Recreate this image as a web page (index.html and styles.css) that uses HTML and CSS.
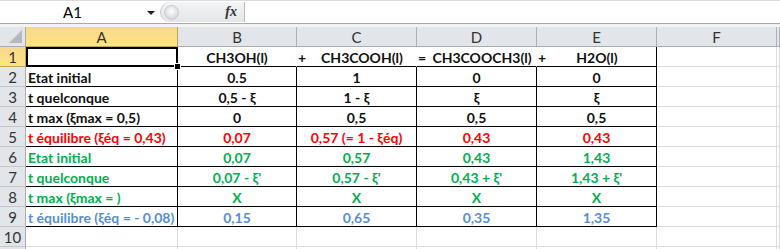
FILE: index.html
```html
<!DOCTYPE html>
<html lang="fr">

<head>
    <meta charset="UTF-8">
    <title>Tableau d'avancement</title>
    <link rel="stylesheet" href="styles.css">
</head>

<body>
    <div class="formula-bar">
        <div class="name-box">A1<span class="drop"></span></div>
        <div class="fx-area">
            <span class="grip"></span>
            <span class="fx">fx</span>
        </div>
        <div class="formula-input"></div>
    </div>
    <div class="strip"></div>

    <div class="sheet">
        <!-- column headers -->
        <div class="corner"><span class="tri"></span></div>
        <div class="col-head sel">A</div>
        <div class="col-head">B</div>
        <div class="col-head">C</div>
        <div class="col-head">D</div>
        <div class="col-head">E</div>
        <div class="col-head">F</div>
        <div class="col-head end"></div>

        <!-- row 1 -->
        <div class="row-head sel">1</div>
        <div class="cell a1"><span class="handle"></span></div>
        <div class="cell eq">CH3OH(l)</div>
        <div class="cell eq"><span class="op">+</span><span class="sp">CH3COOH(l)</span></div>
        <div class="cell eq"><span class="op">=</span><span class="sp">CH3COOCH3(l)</span></div>
        <div class="cell eq last"><span class="op">+</span><span class="sp shift">H2O(l)</span></div>
        <div class="cell"></div>
        <div class="cell end"></div>

        <!-- row 2 -->
        <div class="row-head">2</div>
        <div class="cell d label">Etat initial</div>
        <div class="cell d">0.5</div>
        <div class="cell d">1</div>
        <div class="cell d">0</div>
        <div class="cell d">0</div>
        <div class="cell"></div>
        <div class="cell end"></div>

        <!-- row 3 -->
        <div class="row-head">3</div>
        <div class="cell d label">t quelconque</div>
        <div class="cell d">0,5 - ξ</div>
        <div class="cell d">1 - ξ</div>
        <div class="cell d">ξ</div>
        <div class="cell d">ξ</div>
        <div class="cell"></div>
        <div class="cell end"></div>

        <!-- row 4 -->
        <div class="row-head">4</div>
        <div class="cell d label">t max (ξmax = 0,5)</div>
        <div class="cell d">0</div>
        <div class="cell d">0,5</div>
        <div class="cell d">0,5</div>
        <div class="cell d">0,5</div>
        <div class="cell"></div>
        <div class="cell end"></div>

        <!-- row 5 -->
        <div class="row-head">5</div>
        <div class="cell d label red">t équilibre (ξéq = 0,43)</div>
        <div class="cell d red">0,07</div>
        <div class="cell d red">0,57 (= 1 - ξéq)</div>
        <div class="cell d red">0,43</div>
        <div class="cell d red">0,43</div>
        <div class="cell"></div>
        <div class="cell end"></div>

        <!-- row 6 -->
        <div class="row-head">6</div>
        <div class="cell d label green">Etat initial</div>
        <div class="cell d green">0,07</div>
        <div class="cell d green">0,57</div>
        <div class="cell d green">0,43</div>
        <div class="cell d green">1,43</div>
        <div class="cell"></div>
        <div class="cell end"></div>

        <!-- row 7 -->
        <div class="row-head">7</div>
        <div class="cell d label green">t quelconque</div>
        <div class="cell d green">0,07 - ξ'</div>
        <div class="cell d green">0,57 - ξ'</div>
        <div class="cell d green">0,43 + ξ'</div>
        <div class="cell d green">1,43 + ξ'</div>
        <div class="cell"></div>
        <div class="cell end"></div>

        <!-- row 8 -->
        <div class="row-head">8</div>
        <div class="cell d label green">t max (ξmax = )</div>
        <div class="cell d green">X</div>
        <div class="cell d green">X</div>
        <div class="cell d green">X</div>
        <div class="cell d green">X</div>
        <div class="cell"></div>
        <div class="cell end"></div>

        <!-- row 9 -->
        <div class="row-head">9</div>
        <div class="cell d label blue">t équilibre (ξéq = - 0,08)</div>
        <div class="cell d blue">0,15</div>
        <div class="cell d blue">0,65</div>
        <div class="cell d blue">0,35</div>
        <div class="cell d blue">1,35</div>
        <div class="cell"></div>
        <div class="cell end"></div>

        <!-- row 10 -->
        <div class="row-head">10</div>
        <div class="cell"></div>
        <div class="cell"></div>
        <div class="cell"></div>
        <div class="cell"></div>
        <div class="cell"></div>
        <div class="cell"></div>
        <div class="cell end"></div>

        <!-- row 11, only its top edge shows -->
        <div class="row-head"></div>
        <div class="cell"></div>
        <div class="cell"></div>
        <div class="cell"></div>
        <div class="cell"></div>
        <div class="cell"></div>
        <div class="cell"></div>
        <div class="cell end"></div>
    </div>
</body>

</html>
```

FILE: styles.css
```css
body {
    margin: 0;
    background-color: #fff;
    font-family: Lato, 'Open Sans', sans-serif;
    overflow: hidden;
}

/* formula bar */

.formula-bar {
    display: flex;
    height: 24px;
    border-top: 1px solid #dadbdc;
    border-bottom: 1px solid #a7abb0;
    box-sizing: border-box;
}

.name-box {
    position: relative;
    width: 160px;
    font-size: 15px;
    line-height: 22px;
    padding-left: 63px;
    box-sizing: border-box;
    color: #000;
}

.drop {
    position: absolute;
    left: 147px;
    top: 10px;
    border-left: 4px solid transparent;
    border-right: 4px solid transparent;
    border-top: 4px solid #222;
}

.fx-area {
    display: flex;
    align-items: center;
    justify-content: space-between;
    width: 85px;
    background: linear-gradient(#f3f4f6, #e3e5e8);
    border-radius: 11px 0 0 11px;
    border-left: 1px solid #c3c6ca;
    border-right: 1px solid #b9bcc0;
    box-sizing: border-box;
    padding: 0 7px 0 3px;
    margin: 1px 0;
}

.grip {
    width: 13px;
    height: 13px;
    border-radius: 50%;
    background: radial-gradient(circle at 50% 40%, #fdfdfd, #c9ccd0);
    border: 1px solid #c7cace;
}

.fx {
    font-family: 'Liberation Serif', serif;
    font-style: italic;
    font-weight: bold;
    font-size: 14px;
    color: #333;
}

.formula-input {
    flex: 1;
}

.strip {
    height: 3px;
    background-color: #f1f2f4;
}

/* sheet */

.sheet {
    display: grid;
    grid-template-columns: 26px 152px 119px 120px 120px 120px 120px 1fr;
    grid-auto-rows: 20px;
}

.corner,
.col-head,
.row-head {
    background-color: #e2e5ea;
    color: #333;
    font-size: 15px;
    box-sizing: border-box;
    display: flex;
    align-items: center;
    justify-content: center;
}

.corner {
    position: relative;
    border-right: 1px solid #a9adb3;
    border-bottom: 1px solid #a9adb3;
}

.tri {
    position: absolute;
    right: 3px;
    bottom: 3px;
    border-left: 13px solid transparent;
    border-bottom: 13px solid #b4b8be;
}

.col-head {
    border-right: 1px solid #aeb2b8;
    border-bottom: 1px solid #a9adb3;
}

.row-head {
    border-right: 1px solid #a9adb3;
    border-bottom: 1px solid #c4c7cc;
}

.col-head.sel,
.row-head.sel {
    background: linear-gradient(#f8d88e, #fde581);
    border-color: #c2a35a;
}

.cell {
    position: relative;
    box-sizing: border-box;
    border-right: 1px solid #dadcdd;
    border-bottom: 1px solid #dadcdd;
    font-size: 14px;
    font-weight: bold;
    color: #111;
    display: flex;
    align-items: center;
    justify-content: center;
    padding-top: 1px;
    white-space: nowrap;
}

.cell.d {
    border-color: #000;
}

.cell.label {
    justify-content: flex-start;
    padding-left: 2px;
}

.cell.eq {
    border-right-color: #fff;
    border-bottom-color: #000;
}

.cell.eq.last {
    border-right-color: #000;
}

.op {
    width: 10px;
    padding-left: 1px;
}

.sp {
    flex: 1;
    text-align: center;
}

.sp.shift {
    padding-right: 10px;
}

.cell.a1 {
    border-right-color: #000;
    border-bottom-color: #000;
    box-shadow: inset 2px 2px 0 #000, inset -1px -1px 0 #000;
}

.handle {
    position: absolute;
    right: -4px;
    bottom: -4px;
    width: 5px;
    height: 5px;
    background-color: #000;
    border: 1px solid #fff;
    z-index: 2;
}

.red {
    color: #ff0000;
}

.green {
    color: #00b050;
}

.blue {
    color: #558ed5;
}
```
